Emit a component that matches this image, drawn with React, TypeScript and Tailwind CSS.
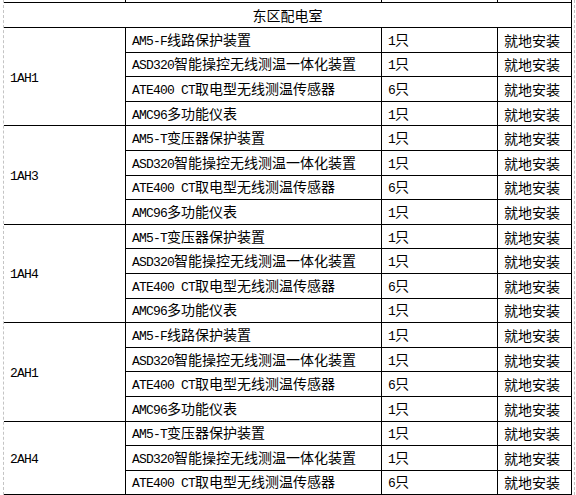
import { Fragment } from "react";

interface Item {
  name: string;
  qty: string;
}

interface Group {
  label: string;
  items: Item[];
}

const ASD = { name: "ASD320智能操控无线测温一体化装置", qty: "1只" };
const ATE = { name: "ATE400 CT取电型无线测温传感器", qty: "6只" };
const AMC = { name: "AMC96多功能仪表", qty: "1只" };
const AMF = { name: "AM5-F线路保护装置", qty: "1只" };
const AMT = { name: "AM5-T变压器保护装置", qty: "1只" };

const groups: Group[] = [
  { label: "1AH1", items: [AMF, ASD, ATE, AMC] },
  { label: "1AH3", items: [AMT, ASD, ATE, AMC] },
  { label: "1AH4", items: [AMT, ASD, ATE, AMC] },
  { label: "2AH1", items: [AMF, ASD, ATE, AMC] },
  { label: "2AH4", items: [AMT, ASD, ATE] },
];

// latin runs get the narrow mono face, CJK stays in Noto
function Mixed({ text }: { text: string }) {
  const parts = text.match(/[\x00-\x7f]+|[^\x00-\x7f]+/g) ?? [];
  return (
    <span className="whitespace-pre">
      {parts.map((p, i) =>
        /^[\x00-\x7f]+$/.test(p) ? (
          <span
            key={i}
            className="font-['Liberation_Mono',monospace] text-[13px] tracking-[-0.8px]"
          >
            {p}
          </span>
        ) : (
          <Fragment key={i}>{p}</Fragment>
        )
      )}
    </span>
  );
}

export default function App() {
  return (
    <div className="w-[576px] h-[495px] bg-white overflow-hidden font-['Noto_Sans_CJK_SC',sans-serif] text-[14px] leading-none text-black">
      <div className="ml-[3px] w-[572px] h-[495px] border-x border-dashed border-[#c4c4c4]">
        <div className="w-[568px] border-r border-b border-black">
          {/* tail of the previous table row */}
          <div className="flex h-[2px]">
            <div className="w-[121px]" />
            <div className="w-[256px] border-l border-black" />
            <div className="w-[116px] border-l border-black" />
            <div className="w-[74px] border-l border-black" />
          </div>

          <div className="h-[25px] border-t border-black flex items-center justify-center">
            东区配电室
          </div>

          {groups.map((g) => (
            <div key={g.label} className="flex">
              <div className="w-[121px] border-t border-black flex items-center pl-[6px]">
                <Mixed text={g.label} />
              </div>
              <div className="flex flex-col">
                {g.items.map((it, i) => (
                  <div key={i} className="flex h-[24.6px] border-t border-black">
                    <div className="w-[256px] border-l border-black flex items-center pl-[6px]">
                      <Mixed text={it.name} />
                    </div>
                    <div className="w-[116px] border-l border-black flex items-center pl-[6px]">
                      <Mixed text={it.qty} />
                    </div>
                    <div className="w-[74px] border-l border-black flex items-center pl-[6px]">
                      就地安装
                    </div>
                  </div>
                ))}
              </div>
            </div>
          ))}
        </div>
      </div>
    </div>
  );
}
